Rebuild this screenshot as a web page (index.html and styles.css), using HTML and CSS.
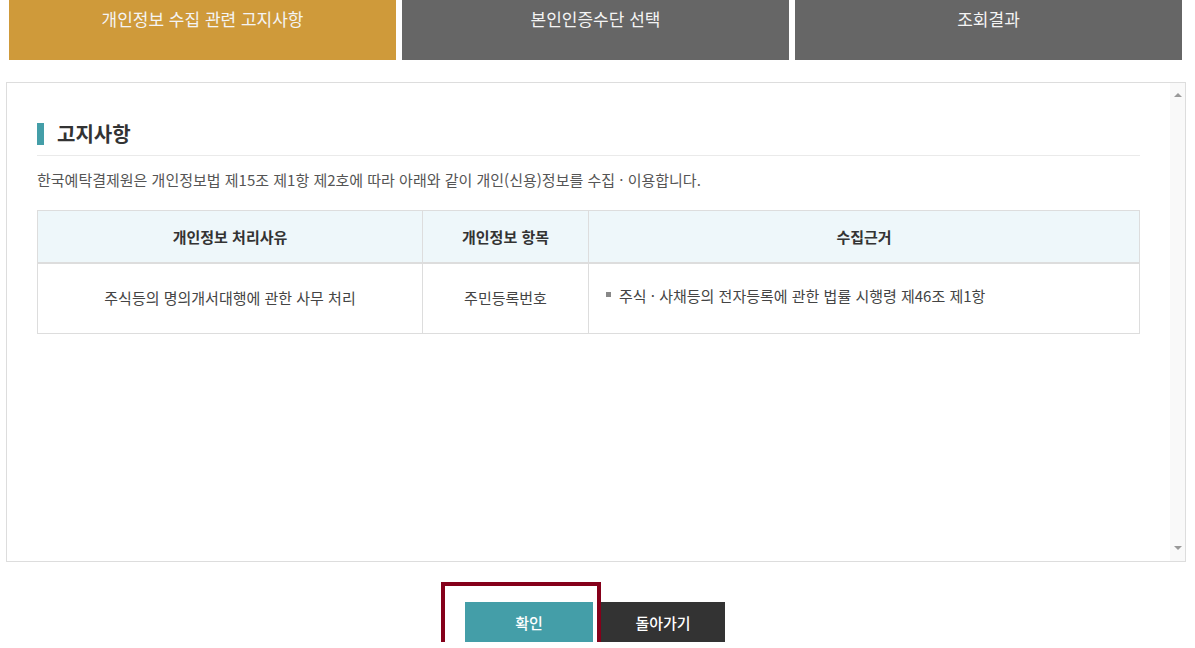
FILE: index.html
```html
<!DOCTYPE html>
<html lang="ko">
<head>
  <meta charset="UTF-8">
  <meta name="viewport" content="width=device-width, initial-scale=1.0">
  <title>개인정보 수집 관련 고지사항</title>
  <link rel="stylesheet" href="styles.css">
</head>
<body>
  <ul class="steps">
    <li class="step active">개인정보 수집 관련 고지사항</li>
    <li class="step">본인인증수단 선택</li>
    <li class="step">조회결과</li>
  </ul>

  <div class="notice-box">
    <div class="notice-content">
      <h3 class="notice-title">고지사항</h3>
      <p class="notice-desc">한국예탁결제원은 개인정보법 제15조 제1항 제2호에 따라 아래와 같이 개인(신용)정보를 수집 · 이용합니다.</p>
      <table class="notice-table">
        <colgroup>
          <col class="col-reason">
          <col class="col-item">
          <col>
        </colgroup>
        <thead>
          <tr>
            <th>개인정보 처리사유</th>
            <th>개인정보 항목</th>
            <th>수집근거</th>
          </tr>
        </thead>
        <tbody>
          <tr>
            <td>주식등의 명의개서대행에 관한 사무 처리</td>
            <td>주민등록번호</td>
            <td class="left"><span class="bullet">주식 · 사채등의 전자등록에 관한 법률 시행령 제46조 제1항</span></td>
          </tr>
        </tbody>
      </table>
    </div>
    <div class="scrollbar">
      <span class="arrow up"></span>
      <span class="arrow down"></span>
    </div>
  </div>

  <div class="btn-area">
    <div class="btn-wrap">
      <button class="btn btn-ok">확인</button>
      <span class="focus-ring"></span>
    </div>
    <button class="btn btn-back">돌아가기</button>
  </div>
</body>
</html>
```

FILE: styles.css
```css
    * {
      box-sizing: border-box;
    }

    body {
      margin: 0;
      font-family: "Noto Sans CJK KR", "Noto Sans", sans-serif;
      color: #444;
      background: #fff;
    }

    .steps {
      display: flex;
      gap: 6px;
      list-style: none;
      margin: 0 0 22px 9px;
      padding: 0;
      width: 1173px;
    }

    .step {
      flex: 1;
      height: 60px;
      padding-top: 7px;
      line-height: 24px;
      text-align: center;
      font-size: 17px;
      color: #f4f4f4;
      background-color: #666;
    }

    .step.active {
      background-color: #cf9a3a;
    }

    .notice-box {
      display: flex;
      margin-left: 6px;
      width: 1180px;
      height: 480px;
      border: 1px solid #ddd;
      overflow: hidden;
    }

    .notice-content {
      flex: 1;
      padding: 40px 30px 0 30px;
    }

    .scrollbar {
      width: 15px;
      background-color: #f9f9f9;
      display: flex;
      flex-direction: column;
      justify-content: space-between;
      align-items: center;
      padding: 10px 0 11px;
    }

    .arrow {
      width: 0;
      height: 0;
      border-left: 4px solid transparent;
      border-right: 4px solid transparent;
    }

    .arrow.up {
      border-bottom: 4px solid #999;
    }

    .arrow.down {
      border-top: 4px solid #999;
    }

    .notice-title {
      margin: 0;
      padding: 0 0 10px 20px;
      position: relative;
      font-size: 20px;
      line-height: 22px;
      font-weight: bold;
      color: #333;
      border-bottom: 1px solid #eaeaea;
    }

    .notice-title::before {
      content: "";
      position: absolute;
      left: 0;
      top: 0;
      width: 7px;
      height: 22px;
      background-color: #449ea8;
    }

    .notice-desc {
      margin: 14px 0 20px;
      font-size: 15px;
      line-height: 20px;
      color: #555;
    }

    .notice-table {
      border-collapse: collapse;
      width: 100%;
      table-layout: fixed;
      font-size: 15px;
    }

    .col-reason {
      width: 385px;
    }

    .col-item {
      width: 166px;
    }

    .notice-table th,
    .notice-table td {
      border: 1px solid #ddd;
      text-align: center;
    }

    .notice-table th {
      height: 52px;
      background-color: #eef7fa;
      color: #333;
      font-weight: bold;
      border-bottom: 2px solid #ddd;
    }

    .notice-table td {
      height: 71px;
      color: #444;
      padding-bottom: 2px;
    }

    .notice-table td.left {
      text-align: left;
      padding-left: 17px;
      padding-bottom: 6px;
    }

    .bullet {
      position: relative;
      padding-left: 13px;
    }

    .bullet::before {
      content: "";
      position: absolute;
      left: 0;
      top: 7px;
      width: 5px;
      height: 5px;
      background-color: #888;
    }

    .btn-area {
      display: flex;
      justify-content: center;
      gap: 8px;
      margin-top: 40px;
      padding-right: 5px;
    }

    .btn-wrap {
      position: relative;
    }

    .btn {
      display: block;
      height: 40px;
      border: 0;
      font-family: inherit;
      font-size: 15px;
      font-weight: 500;
      color: #fff;
    }

    .btn-ok {
      width: 128px;
      background-color: #449ea8;
    }

    .btn-back {
      width: 124px;
      background-color: #333;
    }

    .focus-ring {
      position: absolute;
      left: -24px;
      top: -20px;
      width: 160px;
      height: 66px;
      border: 4px solid #85001a;
      border-bottom: 0;
    }
```
